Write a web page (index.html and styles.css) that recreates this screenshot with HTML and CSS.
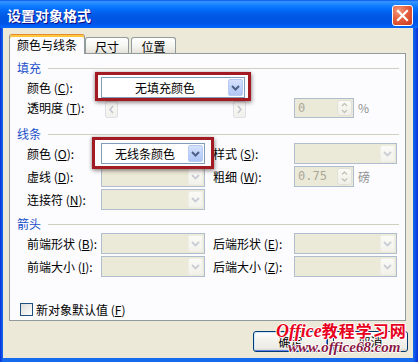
FILE: index.html
```html
<!DOCTYPE html>
<html lang="zh-CN">
<head>
<meta charset="utf-8">
<title>设置对象格式</title>
<link rel="stylesheet" href="styles.css">
</head>
<body>
<div class="window">
  <div class="titlebar">
    <span class="title">设置对象格式</span>
    <span class="close"><svg width="19" height="19" viewBox="0 0 19 19"><path d="M5 5 L14 14 M14 5 L5 14" stroke="#fff" stroke-width="2.2" stroke-linecap="square" fill="none"/></svg></span>
  </div>
  <div class="client">
    <div class="tabs">
      <div class="tab active">颜色与线条</div>
      <div class="tab t2">尺寸</div>
      <div class="tab t3">位置</div>
    </div>
    <div class="panel">
      <div class="sect"><span class="sect-name">填充</span><span class="sect-line"></span></div>
      <div class="rows fill">
        <span class="lbl c1">颜色 (<u>C</u>):</span>
        <span class="mark m1 cwide">
          <span class="combo"><span class="val">无填充颜色</span><span class="drop"><svg width="15" height="17" viewBox="0 0 15 17"><path d="M4 7 L7.5 10.5 L11 7" stroke="#4D6185" stroke-width="2" fill="none"/></svg></span></span>
        </span>
        <span class="lbl c1">透明度 (<u>T</u>):</span>
        <span class="slider cwide">
          <span class="sbtn"><svg width="11" height="15" viewBox="0 0 11 15"><path d="M7 4 L4 7.5 L7 11" stroke="#C2C6CE" stroke-width="1.6" fill="none"/></svg></span>
          <span class="sbtn"><svg width="11" height="15" viewBox="0 0 11 15"><path d="M4 4 L7 7.5 L4 11" stroke="#C2C6CE" stroke-width="1.6" fill="none"/></svg></span>
        </span>
        <span class="spin-wrap c5">
          <span class="spin"><span class="sval">0</span><span class="sarrows"><svg width="13" height="16" viewBox="0 0 13 16"><path d="M4 6 L6.5 3.5 L9 6 M4 10 L6.5 12.5 L9 10" stroke="#C5C3B8" stroke-width="1.4" fill="none"/></svg></span></span>
          <span class="unit">%</span>
        </span>
      </div>

      <div class="sect s2"><span class="sect-name">线条</span><span class="sect-line"></span></div>
      <div class="rows lines">
        <span class="lbl c1">颜色 (<u>O</u>):</span>
        <span class="mark m2 c2">
          <span class="combo"><span class="val">无线条颜色</span><span class="drop"><svg width="15" height="17" viewBox="0 0 15 17"><path d="M4 7 L7.5 10.5 L11 7" stroke="#4D6185" stroke-width="2" fill="none"/></svg></span></span>
        </span>
        <span class="lbl c4">样式 (<u>S</u>):</span>
        <span class="combo off c5"><span class="val"></span><span class="drop"><svg width="15" height="17" viewBox="0 0 15 17"><path d="M4 7 L7.5 10.5 L11 7" stroke="#C9CDD6" stroke-width="1.8" fill="none"/></svg></span></span>

        <span class="lbl c1">虚线 (<u>D</u>):</span>
        <span class="combo off c2"><span class="val"></span><span class="drop"><svg width="15" height="17" viewBox="0 0 15 17"><path d="M4 7 L7.5 10.5 L11 7" stroke="#C9CDD6" stroke-width="1.8" fill="none"/></svg></span></span>
        <span class="lbl c4">粗细 (<u>W</u>):</span>
        <span class="spin-wrap c5">
          <span class="spin tall"><span class="sval">0.75</span><span class="sarrows"><svg width="13" height="17" viewBox="0 0 13 17"><path d="M4 6.5 L6.5 4 L9 6.5 M4 10.5 L6.5 13 L9 10.5" stroke="#C5C3B8" stroke-width="1.4" fill="none"/></svg></span></span>
          <span class="unit">磅</span>
        </span>

        <span class="lbl c1">连接符 (<u>N</u>):</span>
        <span class="combo off c2"><span class="val"></span><span class="drop"><svg width="15" height="17" viewBox="0 0 15 17"><path d="M4 7 L7.5 10.5 L11 7" stroke="#C9CDD6" stroke-width="1.8" fill="none"/></svg></span></span>
      </div>

      <div class="sect s3"><span class="sect-name">箭头</span><span class="sect-line"></span></div>
      <div class="rows arrows">
        <span class="lbl c1">前端形状 (<u>B</u>):</span>
        <span class="combo off c2"><span class="val"></span><span class="drop"><svg width="15" height="17" viewBox="0 0 15 17"><path d="M4 7 L7.5 10.5 L11 7" stroke="#C9CDD6" stroke-width="1.8" fill="none"/></svg></span></span>
        <span class="lbl c4">后端形状 (<u>E</u>):</span>
        <span class="combo off c5"><span class="val"></span><span class="drop"><svg width="15" height="17" viewBox="0 0 15 17"><path d="M4 7 L7.5 10.5 L11 7" stroke="#C9CDD6" stroke-width="1.8" fill="none"/></svg></span></span>

        <span class="lbl c1">前端大小 (<u>I</u>):</span>
        <span class="combo off c2"><span class="val"></span><span class="drop"><svg width="15" height="17" viewBox="0 0 15 17"><path d="M4 7 L7.5 10.5 L11 7" stroke="#C9CDD6" stroke-width="1.8" fill="none"/></svg></span></span>
        <span class="lbl c4">后端大小 (<u>Z</u>):</span>
        <span class="combo off c5"><span class="val"></span><span class="drop"><svg width="15" height="17" viewBox="0 0 15 17"><path d="M4 7 L7.5 10.5 L11 7" stroke="#C9CDD6" stroke-width="1.8" fill="none"/></svg></span></span>
      </div>

      <div class="check-row">
        <span class="checkbox"></span>
        <span class="check-label">新对象默认值 (<u>F</u>)</span>
      </div>
    </div>
    <div class="buttons">
      <span class="btn default">确定</span>
      <span class="btn">取消</span>
    </div>
  </div>
  <div class="watermark">
    <div class="wm1"><span class="wm-en">Office</span><span class="wm-cn">教程学习网</span></div>
    <div class="wm2">www.office68.com</div>
  </div>
</div>
</body>
</html>
```

FILE: styles.css
```css
html, body {
  margin: 0;
  padding: 0;
}
body {
  width: 418px;
  height: 362px;
  overflow: hidden;
  font-family: "Noto Sans CJK SC", "Liberation Sans", sans-serif;
  font-size: 12px;
  color: #000;
}
u { text-decoration: underline; text-underline-offset: 1px; }

.window {
  position: relative;
  width: 418px;
  height: 362px;
  display: flex;
  flex-direction: column;
  background: linear-gradient(to right, #0831D9 0, #166AEE 3px, #166AEE 413px, #0831D9 418px);
}

.titlebar {
  height: 28px;
  flex: none;
  display: flex;
  align-items: center;
  justify-content: space-between;
  padding: 0 5px 0 7px;
  background: linear-gradient(to bottom, #0058EE 0%, #3A93FF 6%, #288EFF 11%, #127DFF 20%, #036FFC 32%, #0262EE 44%, #0057E5 60%, #0054E3 76%, #0055EB 86%, #005BF5 92%, #026AFE 96%, #0262EE 100%);
}
.title {
  color: #fff;
  font-weight: bold;
  font-size: 14px;
  line-height: 16px;
  letter-spacing: 0;
  text-shadow: 1px 1px 0 #0F1089;
  padding-top: 1px;
}
.close {
  width: 19px;
  height: 19px;
  border: 1px solid #fff;
  border-radius: 3px;
  background: radial-gradient(circle at 30% 25%, #F49A7C 0%, #E55F3E 45%, #C8391B 100%);
  display: flex;
  align-items: center;
  justify-content: center;
  margin-top: 2px;
}

.client {
  flex: 1;
  margin: 0 5px 4px 3px;
  background: #ECE9D8;
  padding: 6px 7px 0 6px;
  display: flex;
  flex-direction: column;
}

.tabs {
  display: flex;
  align-items: flex-end;
  height: 19px;
}
.tab {
  box-sizing: border-box;
  text-align: center;
  border: 1px solid #919B9C;
  border-bottom: none;
  border-radius: 3px 3px 0 0;
  line-height: 13px;
  height: 16px;
  padding-top: 2px;
  background: linear-gradient(to bottom, #FFFFFF 0%, #F3F3EF 60%, #E4E2D8 100%);
}
.tab.active {
  position: relative;
  z-index: 2;
  width: 76px;
  height: 20px;
  margin-bottom: -1px;
  border-top: 1px solid #E68B2C;
  box-shadow: inset 0 2px 0 #FFC73C;
  padding-top: 3px;
  line-height: 14px;
  background: #FCFCFE;
}
.tab.t2 { width: 44px; margin-left: 0; }
.tab.t3 { width: 45px; margin-left: 2px; }

.panel {
  position: relative;
  z-index: 1;
  width: 397px;
  box-sizing: border-box;
  border: 1px solid #919B9C;
  background: #FCFCFE;
  padding: 7px 0 4px 0;
}

.sect {
  display: flex;
  align-items: center;
  height: 14px;
  padding: 0 6px 0 7px;
}
.sect.s2 { margin-top: 9px; }
.sect.s3 { margin-top: 7px; }
.sect-name {
  color: #1B4FC9;
  line-height: 14px;
}
.sect-line {
  flex: 1;
  height: 1px;
  background: #D0D0BF;
  margin-left: 7px;
}

.rows {
  display: grid;
  grid-template-columns: 74px 104px 8px 81px 103px;
  grid-auto-rows: 21px;
  row-gap: 2px;
  align-items: center;
  margin: 2px 0 0 17px;
}
.rows.fill {
  grid-template-rows: 21px 20px;
  row-gap: 0;
}
.c1 { grid-column: 1; }
.c2 { grid-column: 2; }
.c4 { grid-column: 4; }
.c5 { grid-column: 5; }
.cwide { grid-column: 2 / 5; }

.lbl {
  white-space: nowrap;
  line-height: 14px;
}

.mark {
  position: relative;
  display: block;
  height: 21px;
}
.mark::after {
  content: "";
  position: absolute;
  border: 3px solid #A31B22;
  box-shadow: 1px 2px 4px rgba(60, 40, 40, 0.45), -1px 0 3px rgba(60, 40, 40, 0.25);
  pointer-events: none;
}
.mark.m1 { width: 144px; }
.mark.m1::after { top: -5px; right: -6px; bottom: -3px; left: -6px; }
.mark.m2::after { top: -6px; right: -9px; bottom: -5px; left: -9px; }

.combo {
  box-sizing: border-box;
  display: flex;
  height: 21px;
  border: 1px solid #7F9DB9;
  background: #fff;
}
.mark .combo { width: 100%; }
.combo .val {
  flex: 1;
  text-align: center;
  line-height: 19px;
}
.drop {
  box-sizing: border-box;
  width: 15px;
  margin: 1px 1px 1px 0;
  border: 1px solid #B9CBF3;
  border-radius: 2px;
  background: linear-gradient(to bottom, #D5E2FD 0%, #C1D3FB 50%, #B0C6F6 100%);
  display: flex;
  align-items: center;
  justify-content: center;
  overflow: hidden;
}
.drop svg { flex: none; }
.combo.off {
  border-color: #AFBDCE;
  background: #EBE9D8;
}
.combo.off .drop {
  border-color: #EEEDE6;
  background: linear-gradient(to bottom, #FAFAF6 0%, #F3F2EC 100%);
}

.slider {
  display: flex;
  justify-content: space-between;
  margin-left: 4px;
  width: 141px;
  height: 17px;
  align-self: end;
}
.sbtn {
  box-sizing: border-box;
  width: 13px;
  height: 17px;
  border: 1px solid #DCE1E8;
  border-radius: 2px;
  background: linear-gradient(to bottom, #FBFBF8, #F1F0EA);
  display: flex;
  align-items: center;
  justify-content: center;
}

.spin-wrap {
  display: flex;
  align-items: center;
  height: 100%;
}
.spin {
  box-sizing: border-box;
  width: 60px;
  height: 20px;
  border: 1px solid #AFBDCE;
  background: #EBE9D8;
  display: flex;
}
.spin.tall { height: 21px; }
.sval {
  flex: 1;
  color: #ACA899;
  padding-left: 3px;
  line-height: 18px;
  font-family: "DejaVu Sans Mono", "Liberation Mono", monospace;
  font-size: 12px;
}
.sarrows {
  box-sizing: border-box;
  width: 15px;
  margin: 1px;
  border: 1px solid #E2E1D9;
  border-radius: 3px;
  background: linear-gradient(to bottom, #FAFAF6, #F0EFE8);
  display: flex;
  align-items: center;
  justify-content: center;
  overflow: hidden;
}
.sarrows svg { flex: none; }
.unit {
  color: #8E8E8E;
  margin-left: 4px;
  line-height: 14px;
}

.check-row {
  display: flex;
  align-items: center;
  margin: 26px 0 0 10px;
  height: 13px;
}
.checkbox {
  box-sizing: border-box;
  width: 13px;
  height: 13px;
  border: 1px solid #1C5180;
  background: linear-gradient(135deg, #DCDCD7 0%, #FFFFFF 100%);
}
.check-label {
  margin-left: 3px;
  line-height: 14px;
}

.buttons {
  display: flex;
  justify-content: flex-end;
  gap: 5px;
  margin: 10px -2px 0 0;
}
.btn {
  box-sizing: border-box;
  width: 75px;
  height: 21px;
  border: 1px solid #003C74;
  border-radius: 3px;
  background: linear-gradient(to bottom, #FFFFFF 0%, #F4F3EE 40%, #ECEBE6 85%, #D6D0C5 100%);
  text-align: center;
  line-height: 19px;
}
.btn.default {
  box-shadow: inset 1px 1px 0 #CEE7FF, inset -1px -1px 0 #6982EE;
}

.watermark {
  position: absolute;
  left: 276px;
  top: 321px;
  z-index: 5;
  font-weight: bold;
  white-space: nowrap;
}
.wm1 {
  color: #E8001C;
  height: 19px;
  line-height: 19px;
  text-shadow: 1px 0 0 #fff, -1px 0 0 #fff, 0 1px 0 #fff, 0 -1px 0 #fff;
}
.wm-en {
  font-family: "Liberation Serif", serif;
  font-style: italic;
  font-size: 18px;
}
.wm-cn {
  font-family: "Noto Sans CJK SC", sans-serif;
  font-size: 16px;
  letter-spacing: 1px;
}
.wm2 {
  font-family: "Liberation Serif", serif;
  font-style: italic;
  font-size: 15px;
  line-height: 14px;
  color: #8A1A45;
  margin-left: 12px;
  text-shadow: 1px 0 0 #fff, -1px 0 0 #fff, 0 1px 0 #fff, 0 -1px 0 #fff;
}
```
